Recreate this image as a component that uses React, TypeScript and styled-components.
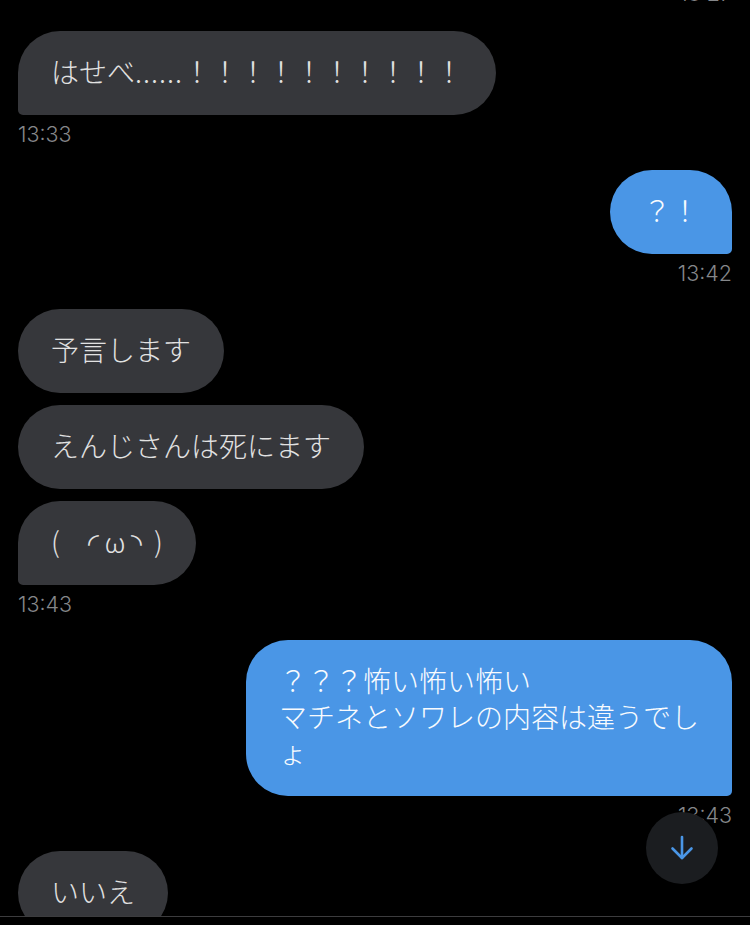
import React from 'react';
import styled, { createGlobalStyle } from 'styled-components';

const GlobalStyle = createGlobalStyle`
  html, body {
    margin: 0;
    padding: 0;
    background: #000;
  }
`;

type Side = 'left' | 'right';

type IBubbleProps = {
  $side: Side;
  $tail?: boolean;
};

type Message = {
  lines: React.ReactNode[];
  tail?: boolean;
};

type Group = {
  side: Side;
  time?: string;
  messages: Message[];
};

const Dots = styled.span`
  letter-spacing: 1px;
`;

const GROUPS: Group[] = [
  {
    side: 'left',
    time: '13:33',
    messages: [{ lines: [<>はせべ<Dots>......</Dots>！！！！！！！！！！</>], tail: true }],
  },
  { side: 'right', time: '13:42', messages: [{ lines: ['？！'], tail: true }] },
  {
    side: 'left',
    time: '13:43',
    messages: [
      { lines: ['予言します'] },
      { lines: ['えんじさんは死にます'] },
      // thin spaces: the kaomoji is wider in the original font
      { lines: ['(\u3000◜\u2009ω\u2009◝\u2009 )'], tail: true },
    ],
  },
  {
    side: 'right',
    time: '13:43',
    messages: [{ lines: ['？？？怖い怖い怖い', 'マチネとソワレの内容は違うでし', 'ょ'], tail: true }],
  },
  { side: 'left', messages: [{ lines: ['いいえ'] }] },
];

export default function App() {
  return (
    <>
      <GlobalStyle />
      <Screen>
        <Feed>
          <ClippedTime>13:27</ClippedTime>
          {GROUPS.map((group, index) => (
            <MessageGroup key={index} $side={group.side}>
              {group.messages.map((message, i) => (
                <Bubble key={i} $side={group.side} $tail={message.tail}>
                  {message.lines.map((line, j) => (
                    <Line key={j}>{line}</Line>
                  ))}
                </Bubble>
              ))}
              {group.time && <Time>{group.time}</Time>}
            </MessageGroup>
          ))}
        </Feed>
        <ScrollButton>
          <svg width="24" height="26" viewBox="0 0 24 26" fill="none" stroke="#4a96e6" strokeWidth="2.6" strokeLinecap="round" strokeLinejoin="round">
            <path d="M12 2V23" />
            <path d="M2.5 13.5L12 23L21.5 13.5" />
          </svg>
        </ScrollButton>
        <BottomBar />
      </Screen>
    </>
  );
}

const Screen = styled.div`
  background: #000;
  font-family: "Noto Sans CJK JP", "Liberation Sans", sans-serif;
  font-weight: 300;
  height: 925px;
  overflow: hidden;
  position: relative;
  width: 750px;
`;

const Feed = styled.div`
  display: flex;
  flex-direction: column;
  padding: 0 18px;
`;

const ClippedTime = styled.div`
  color: #85878a;
  font-family: Inter, "Liberation Sans", sans-serif;
  font-size: 21.5px;
  height: 31px;
  line-height: 19px;
  margin-bottom: 16px;
  margin-top: -16px;
  text-align: right;
`;

const MessageGroup = styled.div<{ $side: Side }>`
  align-items: ${({ $side }) => ($side === 'left' ? 'flex-start' : 'flex-end')};
  display: flex;
  flex-direction: column;
  gap: 12px;
  margin-bottom: 27px;
`;

const Bubble = styled.div<IBubbleProps>`
  background: ${({ $side }) => ($side === 'left' ? '#36373b' : '#4a96e6')};
  border-radius: 42px;
  box-sizing: border-box;
  color: ${({ $side }) => ($side === 'left' ? '#e2e2e2' : '#f8fbfe')};
  font-size: 28px;
  line-height: 36px;
  padding: 22px 33px 26px;
  ${({ $side, $tail }) =>
    $tail && ($side === 'left' ? 'border-bottom-left-radius: 5px;' : 'border-bottom-right-radius: 5px;')}
`;

const Line = styled.div`
  white-space: pre;
`;

const Time = styled.div`
  color: #85878a;
  font-family: Inter, "Liberation Sans", sans-serif;
  font-size: 21.5px;
  line-height: 19px;
  margin-bottom: -1px;
  margin-top: -2px;
`;

const ScrollButton = styled.div`
  align-items: center;
  background: #1b1d20;
  border-radius: 50%;
  display: flex;
  height: 72px;
  justify-content: center;
  left: 646px;
  position: absolute;
  top: 812px;
  width: 72px;
`;

const BottomBar = styled.div`
  background: #000;
  border-top: 1px solid #3c3c3e;
  bottom: 0;
  height: 8px;
  left: 0;
  position: absolute;
  right: 0;
`;
